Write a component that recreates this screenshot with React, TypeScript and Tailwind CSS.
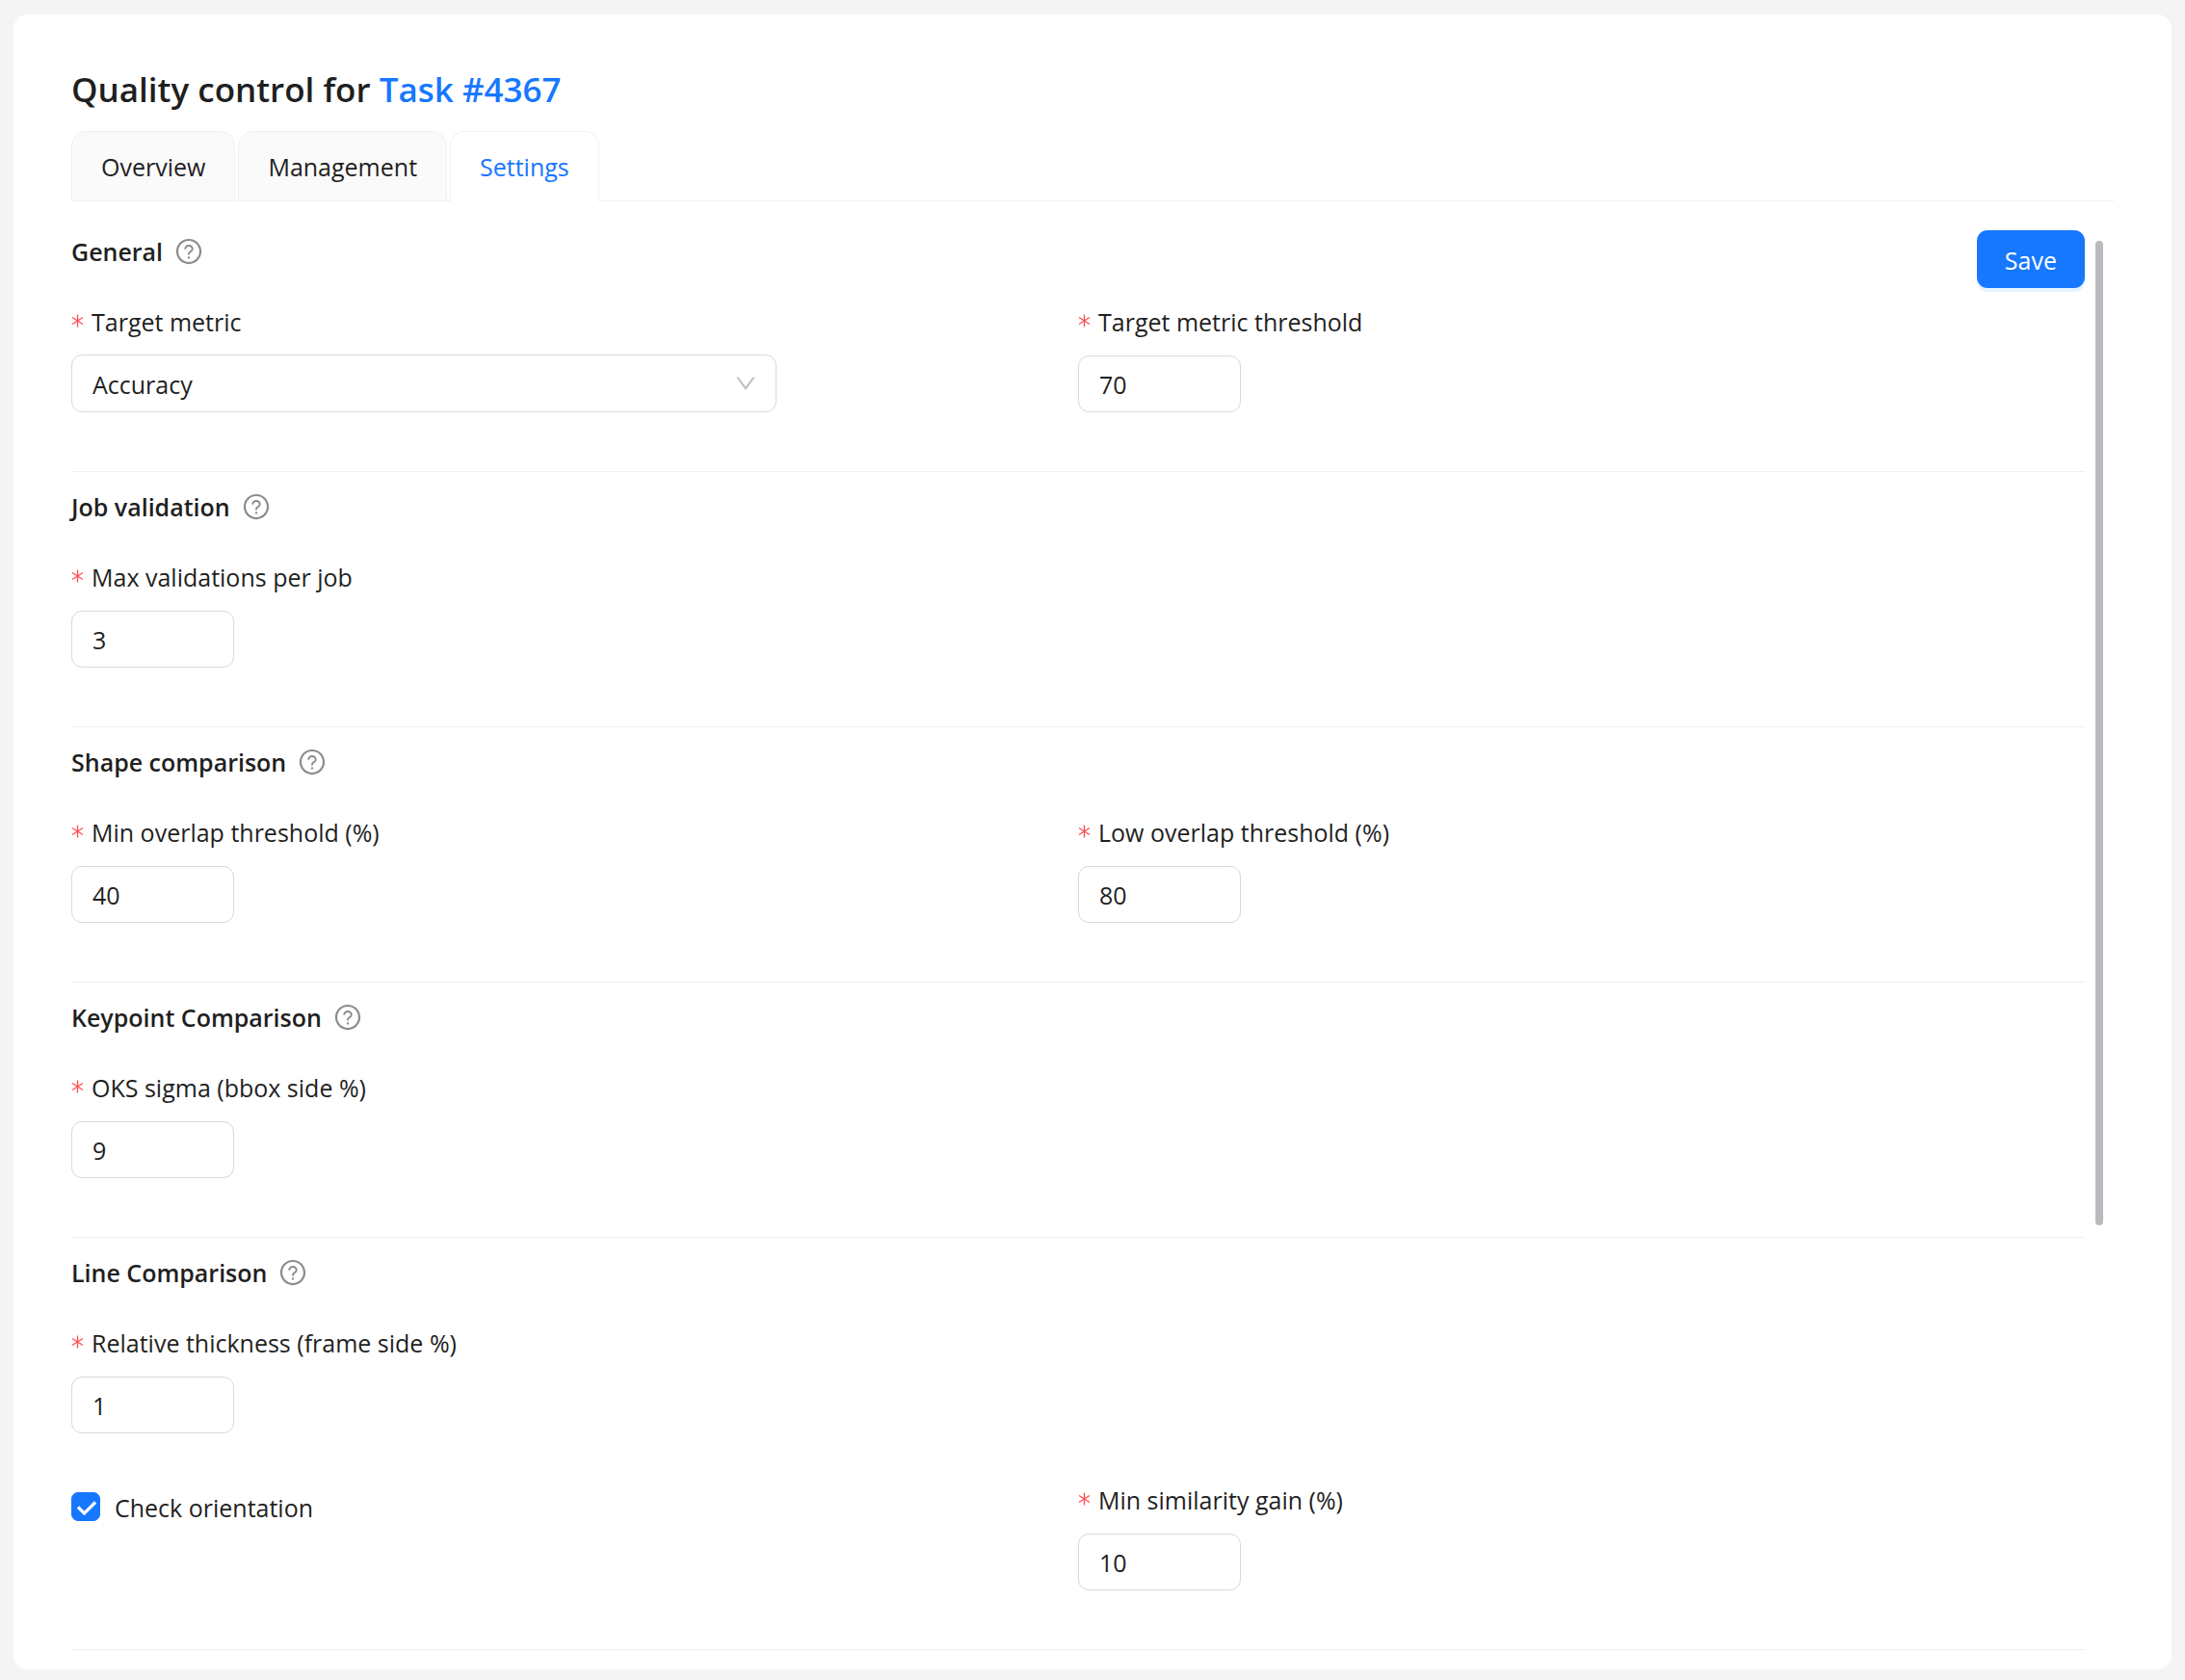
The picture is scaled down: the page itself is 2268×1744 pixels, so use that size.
import React from "react";
import { AiOutlineDown, AiOutlineQuestionCircle } from "react-icons/ai";

function Tab({ label, active }: { label: string; active?: boolean }) {
  return (
    <button
      type="button"
      role="tab"
      aria-selected={!!active}
      className={
        active
          ? "-mb-px h-[73px] rounded-t-[15px] border border-[#f0f0f0] border-b-white bg-white px-[30px] text-[#1677ff]"
          : "-mb-px h-[73px] rounded-t-[15px] border border-[#f0f0f0] bg-[#fafafa] px-[30px]"
      }
    >
      {label}
    </button>
  );
}

function Section({
  title,
  action,
  children,
}: {
  title: string;
  action?: React.ReactNode;
  children: React.ReactNode;
}) {
  return (
    <section className="border-b border-[#f0f0f0] pt-3 pb-[61px]">
      <div className="mb-[29px] flex h-12 items-start justify-between">
        <div className="flex h-12 items-center gap-3">
          <h2 className="font-semibold">{title}</h2>
          <AiOutlineQuestionCircle className="size-[30px] text-[#8c8c8c]" />
        </div>
        {action}
      </div>
      <div className="grid grid-cols-2 gap-y-[49px]">{children}</div>
    </section>
  );
}

function Label({ id, text }: { id: string; text: string }) {
  return (
    <label htmlFor={id} className="mb-[14px] flex h-10 items-center">
      <svg viewBox="0 0 13 16" className="mr-2 h-4 w-[13px]" aria-hidden="true">
        <path d="M6.5 0.5v13M1 3.5l11 7M12 3.5l-11 7" stroke="#ff4d4f" strokeWidth="1.3" fill="none" />
      </svg>
      {text}
    </label>
  );
}

function NumberField({ id, label, value }: { id: string; label: string; value: string }) {
  return (
    <div>
      <Label id={id} text={label} />
      <div className="flex h-15 items-center">
        <input
          id={id}
          type="text"
          inputMode="numeric"
          defaultValue={value}
          className="h-[59px] w-[169px] rounded-[11px] border border-[#d9d9d9] px-[21px] pt-0.5 outline-none"
        />
      </div>
    </div>
  );
}

export default function App() {
  return (
    <div className="min-h-screen bg-[#f4f4f4] px-[14px] pt-[15px] pb-3 font-['Open_Sans','Noto_Sans',sans-serif] text-[25px] leading-10 text-[#1f1f1f]">
      <main className="rounded-[15px] bg-white px-[60px] pt-[52px] pb-5">
        <h1 className="mb-[17px] text-[35px] leading-[52px] font-semibold">
          Quality control for{" "}
          <a href="#task" className="text-[#1677ff]">
            Task #4367
          </a>
        </h1>
        <div role="tablist" className="flex gap-[3px] border-b border-[#f0f0f0]">
          <Tab label="Overview" />
          <Tab label="Management" />
          <Tab label="Settings" active />
        </div>
        <div className="flex pt-4">
          <form className="flex-1" onSubmit={(e) => e.preventDefault()}>
            <Section
              title="General"
              action={
                <button
                  type="submit"
                  className="mt-0.5 h-15 shrink-0 rounded-[11px] bg-[#1677ff] px-[29px] pt-0.5 text-white shadow-[0_4px_0_#e6f4ff]"
                >
                  Save
                </button>
              }
            >
              <div>
                <Label id="metric" text="Target metric" />
                <div className="relative w-[70%]">
                  <select
                    id="metric"
                    defaultValue="Accuracy"
                    className="h-15 w-full appearance-none rounded-[11px] border border-[#d9d9d9] bg-white px-[21px] pt-0.5 outline-none"
                  >
                    <option>Accuracy</option>
                    <option>Precision</option>
                    <option>Recall</option>
                  </select>
                  <AiOutlineDown className="pointer-events-none absolute top-[17px] right-[19px] size-[26px] text-[#bfbfbf]" />
                </div>
              </div>
              <NumberField id="threshold" label="Target metric threshold" value="70" />
            </Section>
            <Section title="Job validation">
              <NumberField id="validations" label="Max validations per job" value="3" />
            </Section>
            <Section title="Shape comparison">
              <NumberField id="min-overlap" label="Min overlap threshold (%)" value="40" />
              <NumberField id="low-overlap" label="Low overlap threshold (%)" value="80" />
            </Section>
            <Section title="Keypoint Comparison">
              <NumberField id="oks" label="OKS sigma (bbox side %)" value="9" />
            </Section>
            <Section title="Line Comparison">
              <div className="col-span-2">
                <NumberField id="thickness" label="Relative thickness (frame side %)" value="1" />
              </div>
              <div className="flex h-[54px] items-center">
                <span className="relative flex size-[30px]">
                  <input
                    id="orientation"
                    type="checkbox"
                    defaultChecked
                    className="size-[30px] appearance-none rounded-[7px] border border-[#d9d9d9] checked:border-[#1677ff] checked:bg-[#1677ff]"
                  />
                  <svg
                    viewBox="0 0 30 30"
                    className="pointer-events-none absolute inset-0 size-[30px]"
                    aria-hidden="true"
                  >
                    <path d="M7 15.5l6.5 6.5L25 10.5" stroke="white" strokeWidth="3.2" fill="none" />
                  </svg>
                </span>
                <label htmlFor="orientation" className="pt-0.5 pl-[15px]">
                  Check orientation
                </label>
              </div>
              <NumberField id="gain" label="Min similarity gain (%)" value="10" />
            </Section>
          </form>
          <div className="mx-[11px] mt-[25px] h-[1022px] w-2 rounded-full bg-[#bab9be]" />
        </div>
      </main>
    </div>
  );
}
